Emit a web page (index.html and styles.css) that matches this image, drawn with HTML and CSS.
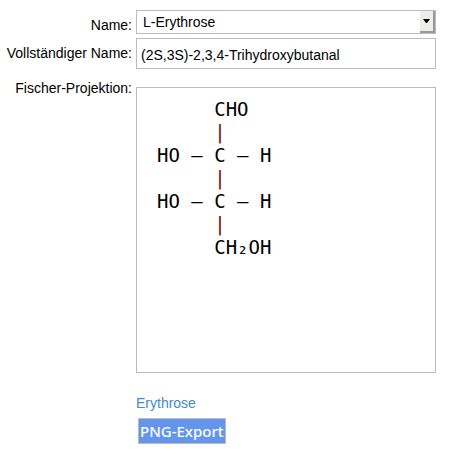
FILE: index.html
```html
<!DOCTYPE html>
<html lang="de">
<head>
<meta charset="utf-8">
<title>Fischer-Projektion</title>
<link rel="stylesheet" href="styles.css">
</head>
<body>
<form class="form">
  <label class="label" for="name">Name:</label>
  <div class="select-wrap">
    <select class="field select" id="name"><option>L-Erythrose</option></select>
    <span class="arrow" aria-hidden="true"><svg width="7" height="4" viewBox="0 0 7 4"><path d="M0 0H7L4 4H3Z"/></svg></span>
  </div>
  <label class="label" for="fullname">Vollständiger Name:</label>
  <input class="field input" id="fullname" type="text" value="(2S,3S)-2,3,4-Trihydroxybutanal">
  <span class="label label-projection">Fischer-Projektion:</span>
  <pre class="projection">     CHO
<span class="bond">     |</span>
HO — C — H
<span class="bond">     |</span>
HO — C — H
<span class="bond">     |</span>
     CH₂OH</pre>
  <div class="actions">
    <a class="link" href="#erythrose">Erythrose</a>
    <button class="export" type="button">PNG-Export</button>
  </div>
</form>
</body>
</html>
```
FILE: styles.css
```css
* {
  box-sizing: border-box;
}

body {
  margin: 0;
  background: #fff;
  color: #000;
  font: 14px/20px "Liberation Sans", Arial, sans-serif;
}

.form {
  display: grid;
  grid-template-columns: 132px 1fr;
  column-gap: 4px;
  row-gap: 3px;
  padding: 10px 15px 12px 0;
}

.label {
  padding-top: 5px;
  text-align: right;
  white-space: nowrap;
}

.label-projection {
  padding-top: 6px;
}

.select-wrap {
  position: relative;
  height: 24px;
}

.field {
  display: block;
  width: 100%;
  margin: 0;
  border: 1px solid #bbb;
  border-radius: 0;
  background: #fff;
  color: #000;
  font: inherit;
}

.select {
  height: 24px;
  padding: 0 20px 0 6px;
  appearance: none;
}

.arrow {
  position: absolute;
  top: 1px;
  right: 1px;
  bottom: 1px;
  width: 15px;
  display: flex;
  align-items: center;
  justify-content: center;
  border-right: 2px solid #999;
  border-bottom: 2px solid #999;
  background: #ededeb;
  pointer-events: none;
}

.input {
  height: 31px;
  padding: 2px 4px 0;
}

.projection {
  min-height: 286px;
  margin: 15px 0 0;
  padding: 10px 20px;
  border: 1px solid #bbb;
  font: 19px/23px "DejaVu Sans Mono", monospace;
}

.bond {
  color: #6a1000;
}

.actions {
  grid-column: 2;
  display: flex;
  flex-direction: column;
  align-items: flex-start;
  gap: 5px;
  padding-top: 17px;
}

.link {
  color: #428bca;
  text-decoration: none;
}

.export {
  height: 26px;
  margin-left: 2px;
  padding: 0 1px;
  border: 1px solid #bbb;
  background: #6495ed;
  color: #fff;
  font: 500 15px/20px "Noto Sans", "Open Sans", sans-serif;
}
```
